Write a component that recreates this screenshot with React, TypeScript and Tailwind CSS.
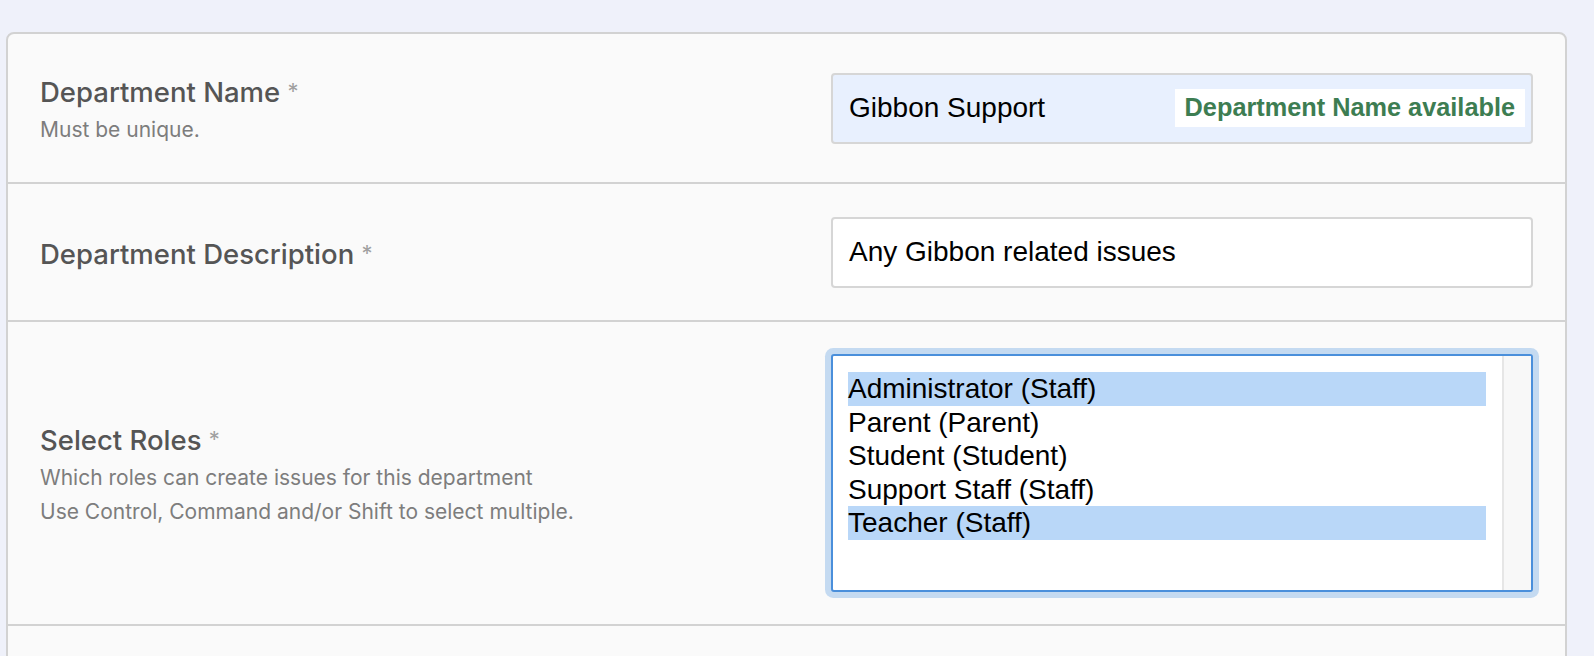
import React from "react";

const roles = [
  { name: "Administrator (Staff)", selected: true },
  { name: "Parent (Parent)", selected: false },
  { name: "Student (Student)", selected: false },
  { name: "Support Staff (Staff)", selected: false },
  { name: "Teacher (Staff)", selected: true },
];

function Label({ title, children }: { title: string; children?: React.ReactNode }) {
  return (
    <div className="pt-[5px] font-['Inter',sans-serif]">
      <div className="text-[27.5px] leading-[34px] font-medium text-[#555555]">
        {title} <span className="text-[22px] font-normal text-[#a0a0a0] relative -top-[3px]">*</span>
      </div>
      {children && (
        <div className="mt-[2px] text-[21px] leading-[34px] text-[#7d7d7d]">{children}</div>
      )}
    </div>
  );
}

export default function App() {
  return (
    <div className="min-h-[656px] bg-[#eff1fa] pt-[32px] pl-[6px] pr-[27px] overflow-hidden">
      <div className="bg-[#fafafa] border-2 border-[#d2d2d2] rounded-lg">
        {/* Department name */}
        <div className="h-[150px] flex items-center justify-between pl-[32px] pr-[32px] border-b-2 border-[#d2d2d2]">
          <Label title="Department Name">Must be unique.</Label>
          <div className="w-[702px] h-[71px] flex items-center justify-between pl-4 pr-[6px] bg-[#e8f0fe] border-2 border-[#d6d6d6] rounded-[4px] font-['Liberation_Sans',Arial,sans-serif]">
            <span className="text-[28px] text-black">Gibbon Support</span>
            <span className="bg-white h-[38px] px-[10px] flex items-center text-[25.3px] font-bold text-[#3d7d52]">
              Department Name available
            </span>
          </div>
        </div>

        {/* Department description */}
        <div className="h-[138px] flex items-center justify-between pl-[32px] pr-[32px] border-b-2 border-[#d2d2d2]">
          <Label title="Department Description" />
          <div className="w-[702px] h-[71px] flex items-center pl-4 bg-white border-2 border-[#d6d6d6] rounded-[4px] font-['Liberation_Sans',Arial,sans-serif]">
            <span className="text-[28px] text-black">Any Gibbon related issues</span>
          </div>
        </div>

        {/* Roles */}
        <div className="h-[304px] flex items-center justify-between pl-[32px] pr-[32px] border-b-2 border-[#d2d2d2]">
          <Label title="Select Roles">
            <div>Which roles can create issues for this department</div>
            <div>Use Control, Command and/or Shift to select multiple.</div>
          </Label>
          <div className="w-[702px] h-[238px] flex bg-white border-2 border-[#4a8fdb] rounded-[3px] shadow-[0_0_0_6px_#c4daf1] font-['Liberation_Sans',Arial,sans-serif]">
            <div className="flex-1 pt-4 pl-[15px] pr-[16px]">
              {roles.map((r) => (
                <div
                  key={r.name}
                  className={`h-[33.5px] leading-[33.5px] text-[28px] text-black ${r.selected ? "bg-[#b9d7f8]" : ""}`}
                >
                  {r.name}
                </div>
              ))}
            </div>
            <div className="w-[29px] bg-[#f8f8f8] border-l-2 border-[#e6e6e6]" />
          </div>
        </div>

        <div className="h-[60px]" />
      </div>
    </div>
  );
}
